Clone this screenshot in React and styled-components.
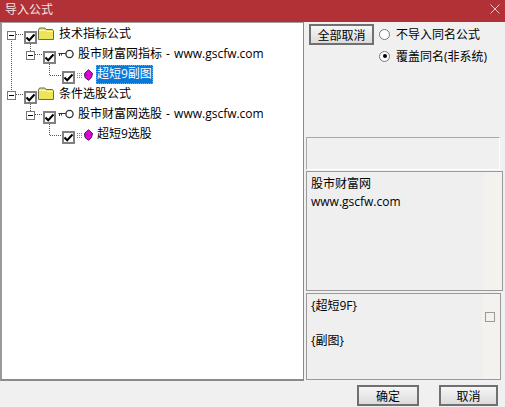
import React from 'react'
import styled, { createGlobalStyle } from 'styled-components'

const GlobalStyle = createGlobalStyle`
  html, body {
    margin: 0;
    padding: 0;
    background: #f0f0f0;
  }
  * {
    box-sizing: border-box;
  }
`

const FONT = `"Open Sans", "Noto Sans CJK SC", sans-serif`

const CheckMark = () =>
  <svg width='9' height='9' viewBox='0 0 9 9'>
    <path d='M0.5 4.5 L3.2 7.2 L8.5 1.5' fill='none' stroke='#000' strokeWidth='2' />
  </svg>

const FolderIcon = () =>
  <S.Folder width='16' height='14' viewBox='0 0 16 14'>
    <path d='M0.5 3 L1.5 1 L7 1 L8 2.5 L14.5 2.5 L15.5 4 L15.5 12.5 L0.5 12.5 Z' fill='#eee45c' stroke='#6f6c4c' />
    <path d='M1 3.5 L8 3.5 L9 4.5 L15 4.5' fill='none' stroke='#fffbb0' />
  </S.Folder>

const KeyIcon = () =>
  <S.Key width='16' height='10' viewBox='0 0 16 10'>
    <circle cx='11.5' cy='5' r='3.6' fill='#fff' stroke='#333' strokeWidth='1.3' />
    <path d='M0.5 4.5 L8 4.5 M1.5 4.5 L1.5 7 M3.5 4.5 L3.5 6.5' fill='none' stroke='#333' />
  </S.Key>

const GemIcon = () =>
  <S.Gem width='16' height='12' viewBox='0 0 16 12'>
    <path d='M0 4.5 H6 M0 6.5 H6 M0 8.5 H6' stroke='#8a8a8a' strokeDasharray='1 1' />
    <path d='M11.5 0.8 L15.5 4.5 L14.5 8.5 L11.5 11.2 L8 8.5 L7.5 4.5 Z' fill='#f000d8' stroke='#3a1560' />
    <path d='M8 4.5 L11.5 7 L15.5 4.5' fill='none' stroke='#b000a8' />
  </S.Gem>

// dotted connectors of the tree, over the rows
const TreeLines = () =>
  <S.Lines width='120' height='150' viewBox='0 0 120 150'>
    <path
      d='M11.5 17 V71 M16 12.5 H24 M30.5 22 V29 M35 32.5 H43 M49.5 42 V53.5 H62
         M16 72.5 H24 M30.5 82 V89 M35 92.5 H43 M49.5 102 V113.5 H62'
      fill='none'
      stroke='#555'
      strokeDasharray='1 1'
    />
  </S.Lines>

const TreeRow = ({ indent, expander, icon, selected, children }) =>
  <S.Row indent={indent}>
    {expander && <S.Expander />}
    <S.Check><CheckMark /></S.Check>
    <S.RowIcon>{icon}</S.RowIcon>
    <S.Label selected={selected}>{children}</S.Label>
  </S.Row>

const App = () =>
  <S.Window>
    <GlobalStyle />
    <S.TitleBar>
      <S.Title>导入公式</S.Title>
      <svg width='10' height='10' viewBox='0 0 10 10'>
        <path d='M0.5 0.5 L9.5 9.5 M9.5 0.5 L0.5 9.5' stroke='#e8c8ca' strokeWidth='1' />
      </svg>
    </S.TitleBar>
    <S.Body>
      <S.Tree>
        <TreeLines />
        <TreeRow indent={5} expander icon={<FolderIcon />}>技术指标公式</TreeRow>
        <TreeRow indent={24} expander icon={<KeyIcon />}>股市财富网指标 - www.gscfw.com</TreeRow>
        <TreeRow indent={60} icon={<GemIcon />} selected>超短9副图</TreeRow>
        <TreeRow indent={5} expander icon={<FolderIcon />}>条件选股公式</TreeRow>
        <TreeRow indent={24} expander icon={<KeyIcon />}>股市财富网选股 - www.gscfw.com</TreeRow>
        <TreeRow indent={60} icon={<GemIcon />}>超短9选股</TreeRow>
      </S.Tree>
      <S.Side>
        <S.Options>
          <S.Button wide>全部取消</S.Button>
          <S.Radios>
            <S.RadioRow><S.Radio />不导入同名公式</S.RadioRow>
            <S.RadioRow><S.Radio checked />覆盖同名(非系统)</S.RadioRow>
          </S.Radios>
        </S.Options>
        <S.EmptyBox />
        <S.InfoBox>
          <S.InfoText>股市财富网<br />www.gscfw.com</S.InfoText>
          <S.Strip />
        </S.InfoBox>
        <S.ParamBox>
          <S.ParamText>
            <div>{'{超短9F}'}</div>
            <div>{'{副图}'}</div>
          </S.ParamText>
          <S.ParamStrip><S.SmallCheck /></S.ParamStrip>
        </S.ParamBox>
      </S.Side>
    </S.Body>
    <S.Footer>
      <S.Button>确定</S.Button>
      <S.Button narrow>取消</S.Button>
    </S.Footer>
  </S.Window>

const S = {
  Window: styled.div`
    width: 505px;
    height: 407px;
    overflow: hidden;
    display: flex;
    flex-direction: column;
    font-family: ${FONT};
    font-size: 12px;
    color: #000;
    background: #f0f0f0;
  `,
  TitleBar: styled.div`
    height: 22px;
    flex: none;
    display: flex;
    align-items: center;
    justify-content: space-between;
    padding: 0 5px 4px 5px;
    background: #b23137;
  `,
  Title: styled.div`
    font-size: 12px;
    color: #f4e4e4;
  `,
  Body: styled.div`
    height: 359px;
    flex: none;
    display: flex;
  `,
  Tree: styled.div`
    position: relative;
    width: 304px;
    height: 359px;
    flex: none;
    padding-top: 2px;
    background: #fff;
    border-left: 2px solid #999;
    border-top: 1px solid #a0a0a0;
    border-bottom: 2px solid #8a8a8a;
    border-right: 1px solid #8a8a8a;
  `,
  Lines: styled.svg`
    position: absolute;
    top: -1px;
    left: -2px;
    pointer-events: none;
  `,
  Row: styled.div`
    display: flex;
    align-items: flex-start;
    height: 20px;
    padding-left: ${props => props.indent}px;
    white-space: nowrap;
  `,
  Expander: styled.div`
    position: relative;
    z-index: 1;
    width: 9px;
    height: 9px;
    flex: none;
    margin-top: 6px;
    margin-right: 8px;
    background: #fff;
    border: 1px solid #777;

    &::after {
      content: '';
      position: absolute;
      top: 3px;
      left: 1px;
      width: 5px;
      height: 1px;
      background: #000;
    }
  `,
  Check: styled.div`
    position: relative;
    z-index: 1;
    display: flex;
    align-items: center;
    justify-content: center;
    width: 13px;
    height: 13px;
    flex: none;
    margin-top: 6px;
    background: #fff;
    border: 2px solid #808080;
  `,
  RowIcon: styled.div`
    display: flex;
    align-items: flex-start;
    width: 21px;
    height: 20px;
    flex: none;
  `,
  Folder: styled.svg`
    flex: none;
    margin: 2px 0 0 1px;
  `,
  Key: styled.svg`
    flex: none;
    margin: 4px 0 0 2px;
  `,
  Gem: styled.svg`
    flex: none;
    margin: 4px 0 0 2px;
  `,
  Label: styled.div`
    height: 19px;
    line-height: 18px;
    padding: 0 1px;
    word-spacing: 1px;
    color: ${props => props.selected ? '#fff' : '#000'};
    background: ${props => props.selected ? '#0a78d7' : 'transparent'};
    outline: ${props => props.selected ? '1px dotted #c8a040' : 'none'};
    outline-offset: -1px;
  `,
  Side: styled.div`
    flex: 1;
    min-width: 0;
    padding-left: 2px;
  `,
  Options: styled.div`
    display: flex;
    align-items: flex-start;
    height: 115px;
    padding: 2px 0 0 3px;
  `,
  Radios: styled.div`
    display: flex;
    flex-direction: column;
    gap: 2px;
    margin-left: 5px;
  `,
  RadioRow: styled.div`
    display: flex;
    align-items: center;
    height: 20px;
    gap: 6px;
  `,
  Radio: styled.span`
    position: relative;
    width: 11px;
    height: 11px;
    border-radius: 50%;
    background: #fff;
    border: 1px solid #777;

    &::after {
      content: '';
      display: ${props => props.checked ? 'block' : 'none'};
      position: absolute;
      top: 2.5px;
      left: 2.5px;
      width: 4px;
      height: 4px;
      border-radius: 50%;
      background: #000;
    }
  `,
  Button: styled.button`
    display: block;
    width: ${props => props.wide ? '65px' : props.narrow ? '59px' : '62px'};
    height: 21px;
    padding: 0;
    font-family: ${FONT};
    font-size: 12px;
    color: #000;
    background: linear-gradient(#f6f6f6, #dcdcdc);
    border: 2px solid #707070;
  `,
  EmptyBox: styled.div`
    width: 194px;
    height: 33px;
    border: 1px solid #a8a8a8;
    border-bottom-color: #fff;
    border-right-color: #fff;
  `,
  InfoBox: styled.div`
    display: flex;
    width: 197px;
    height: 120px;
    margin-top: 1px;
    border: 1px solid #999;
  `,
  InfoText: styled.div`
    flex: 1;
    padding: 3px 4px;
    line-height: 18px;
    background: #efefef;
  `,
  Strip: styled.div`
    width: 18px;
    background: #f3f2ef;
  `,
  ParamBox: styled.div`
    display: flex;
    width: 195px;
    height: 87px;
    margin-top: 2px;
    border: 1px solid #999;
  `,
  ParamText: styled.div`
    flex: 1;
    display: flex;
    flex-direction: column;
    gap: 17px;
    padding: 3px 4px;
    line-height: 18px;
    background: #efefef;
  `,
  ParamStrip: styled.div`
    width: 18px;
    padding: 18px 0 0 3px;
    background: #f3f2ef;
  `,
  SmallCheck: styled.div`
    width: 10px;
    height: 10px;
    border: 1px solid #999;
  `,
  Footer: styled.div`
    display: flex;
    justify-content: flex-end;
    gap: 20px;
    padding: 4px 7px 0 0;
  `
}

export default App
